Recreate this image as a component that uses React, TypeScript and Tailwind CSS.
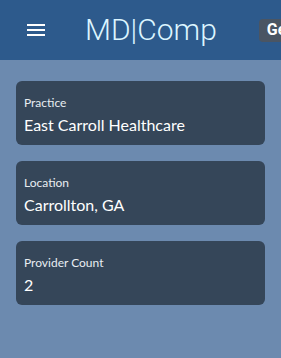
import React from 'react';

const fields = [
  { label: 'Practice', value: 'East Carroll Healthcare' },
  { label: 'Location', value: 'Carrollton, GA' },
  { label: 'Provider Count', value: '2' },
];

const MenuIcon = () => (
  <svg width="24" height="24" viewBox="0 0 24 24" fill="currentColor">
    <path d="M3 18h18v-2H3v2zm0-5h18v-2H3v2zm0-7v2h18V6H3z" />
  </svg>
);

export default function App() {
  return (
    <div className="w-[281px] h-[358px] overflow-hidden bg-[#6c8aaf] font-['Lato',sans-serif]">
      {/* Header */}
      <div className="h-[60px] bg-[#2d5a8c] flex items-center">
        <div className="ml-6 text-white">
          <MenuIcon />
        </div>
        <div className="ml-[37px] text-[30px] font-light text-[#dcf5ff] font-['Roboto',sans-serif] leading-none whitespace-nowrap">
          MD|Comp
        </div>
        <div className="ml-[42px] h-[23px] bg-[#4a5563] rounded-sm pl-2 pr-2 flex items-center text-white font-bold text-[16px] font-['Roboto',sans-serif] whitespace-nowrap">
          Ge
        </div>
      </div>

      {/* Cards */}
      <div className="pt-[21px] px-4 flex flex-col gap-4">
        {fields.map((f) => (
          <div key={f.label} className="h-16 rounded-md bg-[#354659] px-2 pt-[14px]">
            <div className="text-[12px] leading-4 text-[#e8edf2]">{f.label}</div>
            <div className="text-[16px] leading-6 text-white mt-[2px]">{f.value}</div>
          </div>
        ))}
      </div>
    </div>
  );
}
